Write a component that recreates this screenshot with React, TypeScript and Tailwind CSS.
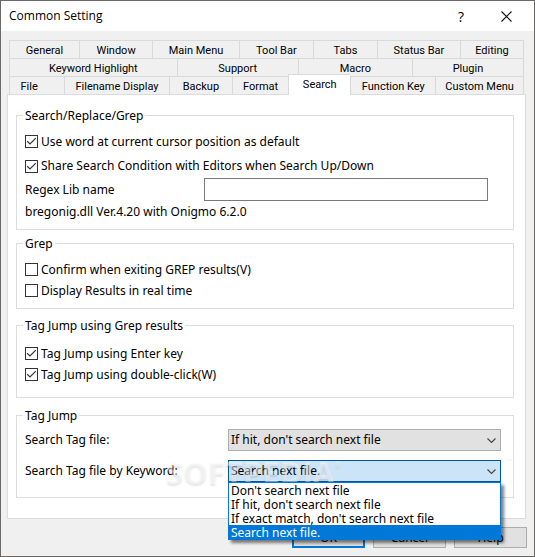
import { useState } from "react";
import type { ReactNode } from "react";
import clsx from "clsx";

const TAB_ROWS = [
    [
        { label: "General", size: "flex-[70]" },
        { label: "Window", size: "flex-[73]" },
        { label: "Main Menu", size: "flex-[87]" },
        { label: "Tool Bar", size: "flex-[74]" },
        { label: "Tabs", size: "flex-[64]" },
        { label: "Status Bar", size: "flex-[83]" },
        { label: "Editing", size: "flex-[63]" },
    ],
    [
        { label: "Keyword Highlight", size: "flex-[168]" },
        { label: "Support", size: "flex-[121]" },
        { label: "Macro", size: "flex-[114]" },
        { label: "Plugin", size: "flex-[111]" },
    ],
    [
        { label: "File", size: "flex-[55]" },
        { label: "Filename Display", size: "flex-[105]" },
        { label: "Backup", size: "flex-[63]" },
        { label: "Format", size: "flex-[56]" },
        { label: "Search", size: "flex-[62]" },
        { label: "Function Key", size: "flex-[85]" },
        { label: "Custom Menu", size: "flex-[88]" },
    ],
];

const OPTIONS = [
    "Don't search next file",
    "If hit, don't search next file",
    "If exact match, don't search next file",
    "Search next file.",
];

const Group = ({
    title,
    className,
    children,
}: {
    title: string;
    className?: string;
    children: ReactNode;
}) => (
    <fieldset className={clsx("min-w-0 border border-[#dcdcdc] px-2", className)}>
        <legend className="-ml-0.5 px-0.5 leading-[15px]">{title}</legend>
        {children}
    </fieldset>
);

const CheckRow = ({
    label,
    checked = false,
    className = "h-[21px]",
}: {
    label: string;
    checked?: boolean;
    className?: string;
}) => {
    const [on, setOn] = useState(checked);

    return (
        <label className={clsx("flex items-center gap-[3px]", className)}>
            <span className="relative flex h-[13px] w-[13px] shrink-0">
                <input
                    type="checkbox"
                    checked={on}
                    onChange={() => setOn(!on)}
                    className="h-[13px] w-[13px] appearance-none border border-[#333333] bg-white"
                />
                {on && (
                    <svg
                        viewBox="0 0 13 13"
                        className="pointer-events-none absolute inset-0 h-[13px] w-[13px]"
                    >
                        <path
                            d="M2.2 6.3 L5 9 L10.8 3.2"
                            fill="none"
                            stroke="#333333"
                            strokeWidth="1.2"
                        />
                    </svg>
                )}
            </span>
            {label}
        </label>
    );
};

const Combo = ({
    id,
    value,
    onChange,
    open = false,
}: {
    id: string;
    value: string;
    onChange: (value: string) => void;
    open?: boolean;
}) => (
    <div className="relative mr-1 h-[22px] w-[273px]">
        <select
            id={id}
            value={value}
            onChange={(e) => onChange(e.target.value)}
            className={clsx(
                "block h-full w-full appearance-none border pl-0.5 pr-5 leading-5 outline-none",
                open
                    ? "border-[#00559b] bg-[#cce4f7]"
                    : "border-[#adadad] bg-[#e1e1e1]"
            )}
        >
            {OPTIONS.map((option) => (
                <option key={option}>{option}</option>
            ))}
        </select>
        <svg
            viewBox="0 0 9 6"
            className="pointer-events-none absolute right-[5px] top-[9px] h-[6px] w-[9px]"
        >
            <path
                d="M0.5 0.5 L4.5 4.5 L8.5 0.5"
                fill="none"
                stroke="#444444"
                strokeWidth="1.1"
            />
        </svg>
        {open && (
            <ul
                role="listbox"
                className="absolute left-0 top-full z-10 w-full border border-[#0078d7] bg-white shadow-[3px_3px_3px_rgba(0,0,0,0.5)]"
            >
                {OPTIONS.map((option) => (
                    <li
                        key={option}
                        role="option"
                        aria-selected={option === value}
                        onClick={() => onChange(option)}
                        className={clsx(
                            "h-[14px] pl-0.5 leading-4",
                            option === value && "bg-[#0078d7] text-white"
                        )}
                    >
                        {option}
                    </li>
                ))}
            </ul>
        )}
    </div>
);

const TitleBar = () => (
    <header className="flex h-[30px] items-center bg-white pl-2 pr-[22px] font-['Open_Sans',sans-serif] text-[12px]">
        <h1>Common Setting</h1>
        <button
            aria-label="Help"
            className="ml-auto mr-[37px] text-[14px]"
        >
            ?
        </button>
        <button aria-label="Close">
            <svg viewBox="0 0 11 11" className="h-[11px] w-[11px]">
                <path
                    d="M0.5 0.5 L10.5 10.5 M10.5 0.5 L0.5 10.5"
                    stroke="#111111"
                    strokeWidth="1.1"
                />
            </svg>
        </button>
    </header>
);

const Tabs = () => {
    const [active, setActive] = useState("Search");

    return (
        <div
            role="tablist"
            className="ml-0.5 mr-[3px] font-['Roboto',sans-serif] text-[11px]"
        >
            {TAB_ROWS.map((row, i) => (
                <div key={i} className="flex h-[18px] border-r border-[#d9d9d9]">
                    {row.map(({ label, size }) => (
                        <button
                            key={label}
                            role="tab"
                            aria-selected={label === active}
                            onClick={() => setActive(label)}
                            className={clsx(
                                "min-w-0 whitespace-nowrap border-l border-t border-[#d9d9d9] pt-0.5",
                                size,
                                label === active &&
                                    "relative -mb-px -mt-0.5 bg-white pb-0.5"
                            )}
                        >
                            <span className={clsx(label === "File" && "pr-4")}>
                                {label}
                            </span>
                        </button>
                    ))}
                </div>
            ))}
        </div>
    );
};

const App = () => {
    const [regexLib, setRegexLib] = useState("");
    const [tagFile, setTagFile] = useState(OPTIONS[1]);
    const [keyword, setKeyword] = useState(OPTIONS[3]);

    return (
        <main className="select-none border border-[#6b6968] bg-[#f0f0f0] font-['Noto_Sans',sans-serif] text-[12px] text-black">
            <TitleBar />
            <div className="pb-2 pl-1.5 pr-[7px] pt-[9px]">
                <Tabs />
                <section className="mr-px border border-[#dcdcdc] bg-white px-2 pb-5 pt-[13px]">
                    <div className="mr-[3px]">
                        <Group title="Search/Replace/Grep" className="pb-[7px] pt-1.5">
                            <CheckRow
                                label="Use word at current cursor position as default"
                                checked
                                className="h-[25px]"
                            />
                            <CheckRow
                                label="Share Search Condition with Editors when Search Up/Down"
                                checked
                                className="h-6"
                            />
                            <div className="mr-[17px] flex items-center justify-between">
                                <label htmlFor="regex-lib">Regex Lib name</label>
                                <input
                                    id="regex-lib"
                                    type="text"
                                    value={regexLib}
                                    onChange={(e) => setRegexLib(e.target.value)}
                                    className="h-[23px] w-[284px] border border-[#7a7a7a] bg-white px-1 outline-none"
                                />
                            </div>
                            <p className="leading-[21px]">
                                bregonig.dll Ver.4.20 with Onigmo 6.2.0
                            </p>
                        </Group>
                        <Group title="Grep" className="mt-1.5 pb-[7px] pt-2">
                            <CheckRow label="Confirm when exiting GREP results(V)" />
                            <CheckRow label="Display Results in real time" />
                        </Group>
                        <Group
                            title="Tag Jump using Grep results"
                            className="mt-[9px] pb-3 pt-2.5"
                        >
                            <CheckRow label="Tag Jump using Enter key" checked />
                            <CheckRow label="Tag Jump using double-click(W)" checked />
                        </Group>
                        <Group title="Tag Jump" className="mt-2.5 pb-[15px] pt-1.5">
                            <div className="flex items-center justify-between">
                                <label htmlFor="tag-file">Search Tag file:</label>
                                <Combo
                                    id="tag-file"
                                    value={tagFile}
                                    onChange={setTagFile}
                                />
                            </div>
                            <div className="relative mt-[9px] flex items-center justify-between">
                                <label htmlFor="keyword">
                                    Search Tag file by Keyword:
                                </label>
                                <Combo
                                    id="keyword"
                                    value={keyword}
                                    onChange={setKeyword}
                                    open
                                />
                                <span
                                    aria-hidden="true"
                                    className="pointer-events-none absolute left-[141px] top-0 flex font-['Open_Sans',sans-serif] text-[31px] font-bold leading-6 text-white/45 [text-shadow:0_2px_2px_rgba(0,0,0,0.1)]"
                                >
                                    SOFTPEDIA
                                    <span className="text-[8px] font-normal leading-none">
                                        ®
                                    </span>
                                </span>
                            </div>
                        </Group>
                    </div>
                </section>
                <footer className="flex justify-end gap-2 pt-2">
                    <button className="h-[21px] w-[73px] border-2 border-[#0078d7] bg-[#e1e1e1]">
                        OK
                    </button>
                    <button className="h-[21px] w-[73px] border border-[#adadad] bg-[#e1e1e1]">
                        Cancel
                    </button>
                    <button className="h-[21px] w-[73px] border border-[#adadad] bg-[#e1e1e1]">
                        Help
                    </button>
                </footer>
            </div>
        </main>
    );
};

export default App;
